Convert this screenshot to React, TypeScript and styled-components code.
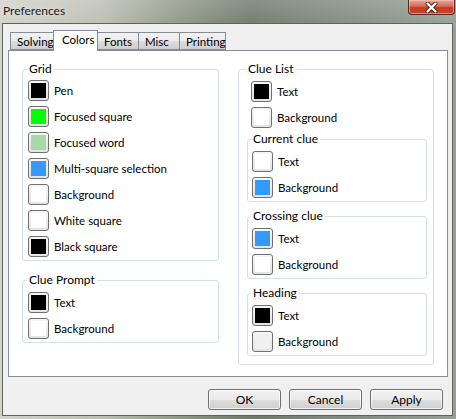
import React from "react";
import styled, { createGlobalStyle } from "styled-components";

interface Swatch {
  label: string;
  color: string;
}

interface Group {
  title: string;
  items: Swatch[];
}

const grid: Group = {
  title: "Grid",
  items: [
    { label: "Pen", color: "#000000" },
    { label: "Focused square", color: "#00ff00" },
    { label: "Focused word", color: "#a8d8a8" },
    { label: "Multi-square selection", color: "#3399ff" },
    { label: "Background", color: "#ffffff" },
    { label: "White square", color: "#ffffff" },
    { label: "Black square", color: "#000000" },
  ],
};

const cluePrompt: Group = {
  title: "Clue Prompt",
  items: [
    { label: "Text", color: "#000000" },
    { label: "Background", color: "#ffffff" },
  ],
};

const clueList: Swatch[] = [
  { label: "Text", color: "#000000" },
  { label: "Background", color: "#ffffff" },
];

const clueSubGroups: Group[] = [
  {
    title: "Current clue",
    items: [
      { label: "Text", color: "#ffffff" },
      { label: "Background", color: "#3399ff" },
    ],
  },
  {
    title: "Crossing clue",
    items: [
      { label: "Text", color: "#3399ff" },
      { label: "Background", color: "#ffffff" },
    ],
  },
  {
    title: "Heading",
    items: [
      { label: "Text", color: "#000000" },
      { label: "Background", color: "#f0f0f0" },
    ],
  },
];

const tabs = [
  { name: "Solving", width: 44 },
  { name: "Colors", width: 45 },
  { name: "Fonts", width: 42 },
  { name: "Misc", width: 42 },
  { name: "Printing", width: 47 },
];

const ColorRow: React.FC<Swatch & { indent?: number }> = ({ label, color, indent = 0 }) => (
  <Row $indent={indent}>
    <SwatchButton>
      <SwatchFill $color={color} />
    </SwatchButton>
    <RowLabel>{label}</RowLabel>
  </Row>
);

const GroupBox: React.FC<{ group: Group; nested?: boolean; top?: number }> = ({
  group,
  nested,
  top = 1,
}) => (
  <Fieldset $nested={nested} $top={top}>
    <Legend>{group.title}</Legend>
    {group.items.map((item, i) => (
      <ColorRow key={i} {...item} />
    ))}
  </Fieldset>
);

const App: React.FC = () => {
  return (
    <>
      <GlobalStyle />
      <Window>
        <TitleBar>
          <Title>Preferences</Title>
          <CloseButton>
            <svg width="13" height="11" viewBox="0 0 13 11">
              <path
                d="M2.5 1.5 L10.5 9.5 M10.5 1.5 L2.5 9.5"
                stroke="#4a1a12"
                strokeWidth="4"
                strokeLinecap="round"
              />
              <path
                d="M2.5 1.5 L10.5 9.5 M10.5 1.5 L2.5 9.5"
                stroke="#ffffff"
                strokeWidth="2.4"
                strokeLinecap="round"
              />
            </svg>
          </CloseButton>
        </TitleBar>
        <Client>
          <TabRow>
            {tabs.map((tab) => (
              <Tab key={tab.name} $active={tab.name === "Colors"} $width={tab.width}>
                {tab.name}
              </Tab>
            ))}
          </TabRow>
          <Panel>
            <Column>
              <GroupBox group={grid} />
              <GroupBox group={cluePrompt} top={2} />
            </Column>
            <Column>
              <Fieldset $outer $top={2}>
                <Legend>Clue List</Legend>
                {clueList.map((item, i) => (
                  <ColorRow key={i} {...item} indent={4} />
                ))}
                <SubGroups>
                  {clueSubGroups.map((g) => (
                    <GroupBox key={g.title} group={g} nested top={2} />
                  ))}
                </SubGroups>
              </Fieldset>
            </Column>
          </Panel>
          <Footer>
            <PushButton>OK</PushButton>
            <PushButton>Cancel</PushButton>
            <PushButton>Apply</PushButton>
          </Footer>
        </Client>
      </Window>
    </>
  );
};

export default App;

const GlobalStyle = createGlobalStyle`
  html, body {
    margin: 0;
    padding: 0;
    background: #8d968c;
  }
  body {
    font-family: "Lato", "Liberation Sans", sans-serif;
    font-size: 11.5px;
    color: #000;
  }
`;

const Window = styled.div`
  width: 456px;
  height: 419px;
  display: flex;
  flex-direction: column;
  box-sizing: border-box;
  background:
    linear-gradient(180deg, rgba(255, 255, 255, 0.18), rgba(255, 255, 255, 0) 30px),
    linear-gradient(90deg, #d2d3c9 0%, #bdbfb2 22%, #8e9685 40%, #6f7a6a 55%, #7f897d 72%, #95a096 100%);
`;

const TitleBar = styled.div`
  height: 23px;
  display: flex;
  align-items: flex-start;
  flex-shrink: 0;
`;

const Title = styled.div`
  padding: 3px 0 0 3px;
  font-size: 12px;
  line-height: 15px;
  color: #1a1a1a;
  text-shadow: 0 0 6px rgba(255, 255, 255, 0.8);
`;

const CloseButton = styled.div`
  margin-left: auto;
  margin-right: 1px;
  width: 47px;
  height: 15px;
  box-sizing: border-box;
  border: 1px solid #5a2a22;
  border-top: none;
  border-radius: 0 0 4px 4px;
  background: linear-gradient(180deg, #e6a899 0%, #d46a55 45%, #c23a22 55%, #c8462c 100%);
  box-shadow: inset 0 0 0 1px rgba(255, 210, 200, 0.5);
  display: flex;
  align-items: center;
  justify-content: center;
`;

const Client = styled.div`
  flex: 1;
  margin: 0 3px 3px 2px;
  border: 1px solid #5d6362;
  background: #f0f0f0;
  display: flex;
  flex-direction: column;
  padding: 6px 4px 0 5px;
  min-height: 0;
`;

const TabRow = styled.div`
  display: flex;
  align-items: flex-end;
  height: 20px;
  padding-left: 2px;
  position: relative;
  z-index: 1;
`;

const Tab = styled.div<{ $active?: boolean; $width: number }>`
  box-sizing: border-box;
  width: ${(p) => p.$width}px;
  height: ${(p) => (p.$active ? 21 : 18)}px;
  margin-bottom: ${(p) => (p.$active ? -1 : 0)}px;
  border: 1px solid #898c95;
  border-bottom: ${(p) => (p.$active ? "none" : "1px solid #898c95")};
  background: ${(p) =>
    p.$active ? "#ffffff" : "linear-gradient(180deg, #f2f2f2 0%, #ebebeb 50%, #dddddd 51%, #cfcfcf 100%)"};
  padding-left: ${(p) => (p.$active ? 8 : 6)}px;
  line-height: ${(p) => (p.$active ? 18 : 17)}px;
  white-space: nowrap;
  & + & {
    margin-left: -1px;
  }
`;

const Panel = styled.div`
  flex: 1;
  border: 1px solid #898c95;
  background: #ffffff;
  display: grid;
  grid-template-columns: 197px 196px;
  column-gap: 19px;
  align-items: start;
  padding: 11px 0 0 13px;
  min-height: 0;
`;

const Column = styled.div`
  display: flex;
  flex-direction: column;
  gap: 12px;
`;

const Fieldset = styled.fieldset<{ $nested?: boolean; $outer?: boolean; $top: number }>`
  margin: 0;
  min-width: 0;
  border: 1px solid #d5dfe5;
  border-radius: 3px;
  padding: ${(p) => p.$top}px ${(p) => (p.$nested ? "4px 1px 4px" : p.$outer ? "6px 8px 8px" : "5px 1px 5px")};
`;

const Legend = styled.legend`
  padding: 0 2px;
  margin-left: -1px;
  line-height: 14px;
  font-size: 12px;
`;

const SubGroups = styled.div`
  display: flex;
  flex-direction: column;
  gap: 7px;
  margin-top: 2px;
`;

const Row = styled.div<{ $indent: number }>`
  height: 26px;
  display: flex;
  align-items: center;
  gap: 5px;
  padding-left: ${(p) => p.$indent}px;
`;

const SwatchButton = styled.div`
  width: 21px;
  height: 21px;
  box-sizing: border-box;
  border: 1px solid #707070;
  border-radius: 3px;
  background: linear-gradient(180deg, #f6f6f6 0%, #e4e4e4 100%);
  padding: 2px;
  flex-shrink: 0;
`;

const SwatchFill = styled.div<{ $color: string }>`
  width: 100%;
  height: 100%;
  background: ${(p) => p.$color};
`;

const RowLabel = styled.span`
  white-space: nowrap;
  font-size: 11.5px;
`;

const Footer = styled.div`
  height: 38px;
  flex-shrink: 0;
  display: flex;
  justify-content: flex-end;
  gap: 8px;
  padding: 12px 5px 0 0;
  box-sizing: border-box;
`;

const PushButton = styled.button`
  width: 73px;
  height: 21px;
  box-sizing: border-box;
  border: 1px solid #707070;
  border-radius: 3px;
  background: linear-gradient(180deg, #f2f2f2 0%, #ebebeb 50%, #dddddd 51%, #cfcfcf 100%);
  box-shadow: inset 0 0 0 1px rgba(255, 255, 255, 0.7);
  font-family: inherit;
  font-size: 12px;
  color: #000;
  padding: 0;
`;
